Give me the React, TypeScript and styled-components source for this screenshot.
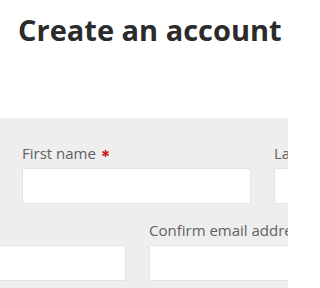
import React from 'react';
import styled, { createGlobalStyle } from 'styled-components';

const GlobalStyle = createGlobalStyle`
  html, body {
    margin: 0;
    padding: 0;
    background: #ffffff;
    overflow: hidden;
  }
  body {
    font-family: "Open Sans", "Liberation Sans", sans-serif;
  }
`;

const Page = styled.div`
  width: 288px;
  height: 288px;
  overflow: hidden;
  display: flex;
  flex-direction: column;
`;

const Header = styled.header`
  flex: 0 0 118px;
  padding: 11px 0 0 18px;
  box-sizing: border-box;
  white-space: nowrap;
  overflow: hidden;
`;

const Title = styled.h1`
  margin: 0;
  font-size: 29px;
  line-height: 38px;
  font-weight: 700;
  color: #2b2b2b;
`;

const Panel = styled.section`
  flex: 1;
  background: #eeeeee;
  padding: 26px 0 0 22px;
  display: flex;
  flex-direction: column;
  gap: 17px;
  overflow: hidden;
`;

const Row = styled.div<{ $shift?: number }>`
  display: flex;
  gap: 23px;
  margin-left: ${p => p.$shift ?? 0}px;
`;

const Field = styled.div`
  flex: 0 0 229px;
  display: flex;
  flex-direction: column;
  gap: 6px;
`;

const Label = styled.label`
  display: flex;
  align-items: center;
  gap: 6px;
  height: 18px;
  font-size: 15px;
  color: #616161;
  white-space: nowrap;
`;

const Input = styled.input`
  box-sizing: border-box;
  width: 100%;
  height: 36px;
  border: 1px solid #e3e3e3;
  border-radius: 2px;
  background: #ffffff;
  outline: none;
`;

const Required = () => (
  <svg width="7" height="7" viewBox="0 0 10 10" aria-hidden="true">
    <g stroke="#c8211c" strokeWidth="2.4" strokeLinecap="round">
      <line x1="5" y1="0.8" x2="5" y2="9.2" />
      <line x1="1.4" y1="2.9" x2="8.6" y2="7.1" />
      <line x1="1.4" y1="7.1" x2="8.6" y2="2.9" />
    </g>
  </svg>
);

export default function App() {
  return (
    <>
      <GlobalStyle />
      <Page>
        <Header>
          <Title>Create an account details</Title>
        </Header>
        <Panel>
          <Row>
            <Field>
              <Label>
                First name <Required />
              </Label>
              <Input />
            </Field>
            <Field>
              <Label>
                Last name <Required />
              </Label>
              <Input />
            </Field>
          </Row>
          <Row $shift={-125}>
            <Field>
              <Label>Email</Label>
              <Input />
            </Field>
            <Field>
              <Label>
                Confirm email address <Required />
              </Label>
              <Input />
            </Field>
          </Row>
        </Panel>
      </Page>
    </>
  );
}
